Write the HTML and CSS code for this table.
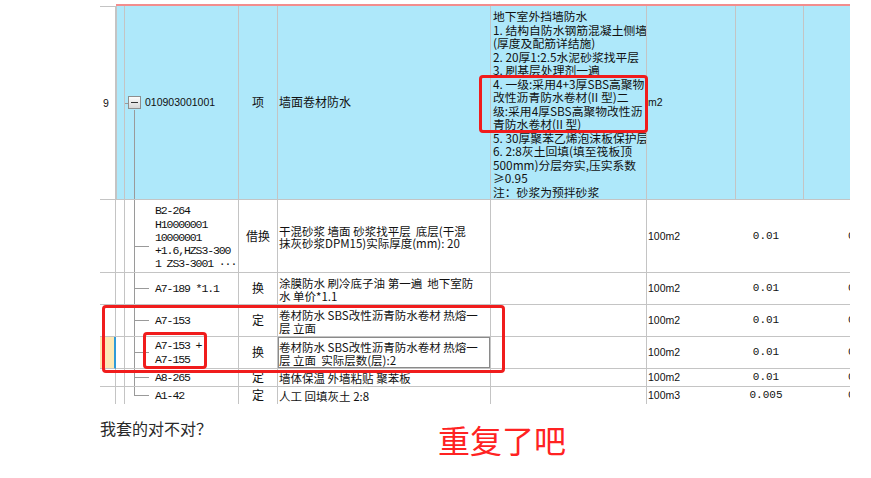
FILE: index.html
```html
<!DOCTYPE html>
<html lang="zh-CN">
<head>
<meta charset="utf-8">
<title>清单套定额</title>
<link rel="stylesheet" href="styles.css">
</head>
<body>
<div class="post">
  <div class="sheet">
    <div class="corner"></div>
    <div class="topbar"></div>

    <div class="c num numtop">9</div>
    <div class="c lvl b lvlb"></div>
    <div class="c coderoot b"><span class="minus"></span><span class="rootcode">010903001001</span></div>
    <div class="c type b">项</div>
    <div class="c name b">墙面卷材防水</div>
    <div class="c feat b">地下室外挡墙防水<br>1. 结构自防水钢筋混凝土侧墙<br>(厚度及配筋详结施)<br>2. 20厚1:2.5水泥砂浆找平层<br>3. 刷基层处理剂一遍<br>4. 一级:采用4+3厚SBS高聚物<br>改性沥青防水卷材(II 型)二<br>级:采用4厚SBS高聚物改性沥<br>青防水卷材(II 型)<br>5. 30厚聚苯乙烯泡沫板保护层<br>6. 2:8灰土回填(填至筏板顶<br>500mm)分层夯实,压实系数<br>≥0.95<br>注：砂浆为预拌砂浆</div>
    <div class="c unit b">m2</div>
    <div class="c qty b"></div>
    <div class="c last b"></div>

    <div class="c num"></div>
    <div class="c lvl"></div>
    <div class="c code code-r2"><span>B2-264<br>H10000001<br>10000001<br>+1.6,HZS3-300<br>1 ZS3-3001 ···</span></div>
    <div class="c type">借换</div>
    <div class="c desc"><span>干混砂浆 墙面 砂浆找平层  底层(干混<br>抹灰砂浆DPM15)实际厚度(mm): 20</span></div>
    <div class="c"></div>
    <div class="c unit nr">100m2</div>
    <div class="c qty nr">0.01</div>
    <div class="c last"><span>0.01</span></div>

    <div class="c num"></div>
    <div class="c lvl"></div>
    <div class="c code"><span>A7-189 *1.1</span></div>
    <div class="c type">换</div>
    <div class="c desc"><span>涂膜防水 刷冷底子油 第一遍  地下室防<br>水 单价*1.1</span></div>
    <div class="c"></div>
    <div class="c unit nr">100m2</div>
    <div class="c qty nr">0.01</div>
    <div class="c last"><span>0.01</span></div>

    <div class="c num"></div>
    <div class="c lvl"></div>
    <div class="c code"><span>A7-153</span></div>
    <div class="c type">定</div>
    <div class="c desc"><span>卷材防水 SBS改性沥青防水卷材 热熔一<br>层 立面</span></div>
    <div class="c"></div>
    <div class="c unit nr">100m2</div>
    <div class="c qty nr">0.01</div>
    <div class="c last"><span>0.01</span></div>

    <div class="c num selected"></div>
    <div class="c lvl"></div>
    <div class="c code code-r5"><span>A7-153 +<br>A7-155</span></div>
    <div class="c type">换</div>
    <div class="c desc editing"><span>卷材防水 SBS改性沥青防水卷材 热熔一<br>层 立面  实际层数(层):2</span></div>
    <div class="c"></div>
    <div class="c unit nr">100m2</div>
    <div class="c qty nr">0.01</div>
    <div class="c last"><span>0.01</span></div>

    <div class="c num"></div>
    <div class="c lvl"></div>
    <div class="c code"><span>A8-265</span></div>
    <div class="c type">定</div>
    <div class="c desc"><span>墙体保温 外墙粘贴 聚苯板</span></div>
    <div class="c"></div>
    <div class="c unit nr">100m2</div>
    <div class="c qty nr">0.01</div>
    <div class="c last"><span>0.01</span></div>

    <div class="c num"></div>
    <div class="c lvl"></div>
    <div class="c code code-end"><span>A1-42</span></div>
    <div class="c type">定</div>
    <div class="c desc"><span>人工 回填灰土 2:8</span></div>
    <div class="c"></div>
    <div class="c unit nr">100m3</div>
    <div class="c qty nr">0.005</div>
    <div class="c last"><span>0.005</span></div>
  </div>

  <p class="question">我套的对不对？</p>

  <div class="mark mark-feat"></div>
  <div class="mark mark-rows"></div>
  <div class="mark mark-code"></div>
  <div class="note">重复了吧</div>
</div>
</body>
</html>
```

FILE: styles.css
```css
* { box-sizing: border-box; }

html, body {
  margin: 0;
  background: #ffffff;
}

.post {
  position: relative;
  height: 478px;
  padding: 4px 0 0 100px;
}

.sheet {
  width: 750px;
  height: 400px;
  overflow: hidden;
  display: grid;
  grid-template-columns: 16px 9px 114px 39px 213px 156px 89px 68px 46px;
  grid-template-rows: 2px 194px 73px 32px 32px 32px 18px 18px;
  font-family: "Noto Sans CJK SC", sans-serif;
  font-size: 11.5px;
  color: #111;
  background: #fff;
}

.corner { grid-column: 1; grid-row: 1; }

.topbar {
  grid-column: 2 / -1;
  grid-row: 1;
  background: #f28d8d;
}

.c {
  display: flex;
  align-items: center;
  overflow: hidden;
  white-space: pre;
  line-height: 12.5px;
  border-right: 1px solid #c4c4c4;
  border-bottom: 1px solid #c4c4c4;
}

.b { background: #aee8fa; }

.nr { border-right: 0; }

.num {
  padding-left: 3px;
  font-family: "Liberation Sans", sans-serif;
  font-size: 10.5px;
}

.numtop { border-top: 1px solid #c4c4c4; }

.selected {
  background: #fde9b6;
  border-right: 2px solid #2f9bd8;
}

.lvlb { box-shadow: inset 1px 0 #c4c4c4; }

.coderoot {
  padding-left: 3px;
  background:
    linear-gradient(#9a9a9a, #9a9a9a) no-repeat 9px 104px / 1px 100%,
    linear-gradient(#9a9a9a, #9a9a9a) no-repeat 0 97px / 3px 1px,
    #aee8fa;
}

.minus {
  width: 13px;
  height: 13px;
  border: 1px solid #8e8e8e;
  background:
    linear-gradient(#333, #333) no-repeat center / 7px 1px,
    linear-gradient(#fdfdfd, #d6d6d6);
}

.rootcode {
  margin-left: 4px;
  font-family: "Liberation Sans", sans-serif;
  font-size: 10.5px;
}

.code {
  padding-left: 30px;
  font-family: "Liberation Mono", monospace;
  font-size: 11.5px;
  letter-spacing: -1.1px;
  line-height: 13.3px;
  background:
    linear-gradient(#9a9a9a, #9a9a9a) no-repeat 9px 0 / 1px 100%,
    linear-gradient(#9a9a9a, #9a9a9a) no-repeat 9px 50% / 15px 1px;
}

.code-r2 {
  padding-top: 3px;
  background:
    linear-gradient(#9a9a9a, #9a9a9a) no-repeat 9px 0 / 1px 100%,
    linear-gradient(#9a9a9a, #9a9a9a) no-repeat 9px 46px / 15px 1px;
}

.code-r5 { line-height: 14px; }

.code-end {
  background:
    linear-gradient(#9a9a9a, #9a9a9a) no-repeat 9px 0 / 1px 9px,
    linear-gradient(#9a9a9a, #9a9a9a) no-repeat 9px 8px / 15px 1px;
}

.type {
  justify-content: center;
  font-size: 12px;
}

.name {
  padding-left: 1px;
  font-size: 12px;
}

.feat {
  display: block;
  padding: 3px 0 0 2px;
  font-size: 11.8px;
  line-height: 13.5px;
}

.desc {
  padding: 2px 0 0 1px;
}

.editing { box-shadow: inset 0 0 0 1px #8a8a8a; }

.unit {
  padding-left: 1px;
  font-family: "Liberation Sans", sans-serif;
  font-size: 10.5px;
}

.qty {
  justify-content: center;
  padding-right: 8px;
  font-family: "Liberation Mono", monospace;
  font-size: 11px;
}

.last {
  border-right: 0;
  padding-left: 44px;
  font-family: "Liberation Mono", monospace;
  font-size: 11px;
}

.question {
  margin: 13px 0 0;
  font-family: "Noto Sans CJK SC", sans-serif;
  font-size: 16px;
  line-height: 22px;
  color: #2a2a2a;
}

.mark {
  position: absolute;
  border: 3px solid #f01c1c;
  border-radius: 4px;
}

.mark-feat { left: 479px; top: 75px; width: 169px; height: 58px; }
.mark-rows { left: 102px; top: 305px; width: 403px; height: 68px; }
.mark-code { left: 143px; top: 332px; width: 64px; height: 37px; }

.note {
  position: absolute;
  left: 438px;
  top: 423px;
  font-family: "Noto Sans CJK SC", sans-serif;
  font-size: 32px;
  line-height: 32px;
  color: #ff2222;
}
```
